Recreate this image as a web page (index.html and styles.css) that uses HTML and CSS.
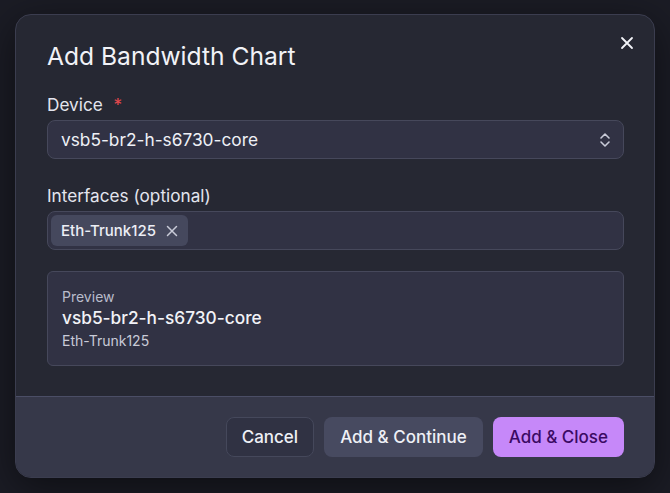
FILE: index.html
```html
<!DOCTYPE html>
<html lang="en">
<head>
    <meta charset="UTF-8">
    <meta name="viewport" content="width=device-width, initial-scale=1.0">
    <title>Add Bandwidth Chart</title>
    <link rel="stylesheet" href="styles.css">
</head>
<body>
    <div class="modal">
        <button class="close-button" aria-label="Close">
            <svg width="14" height="14" viewBox="0 0 14 14">
                <path d="M2 2 L12 12 M12 2 L2 12" stroke="#f2f3f8" stroke-width="1.8" stroke-linecap="round"/>
            </svg>
        </button>

        <div class="modal-body">
            <h2 class="modal-title">Add Bandwidth Chart</h2>

            <div class="field">
                <label class="field-label">Device <span class="required">*</span></label>
                <div class="select">
                    <span>vsb5-br2-h-s6730-core</span>
                    <svg class="select-icon" width="12" height="18" viewBox="0 0 12 18">
                        <path d="M2 7 L6 3 L10 7 M2 11 L6 15 L10 11" fill="none" stroke="#c9cbd8" stroke-width="1.6" stroke-linecap="round" stroke-linejoin="round"/>
                    </svg>
                </div>
            </div>

            <div class="field">
                <label class="field-label">Interfaces (optional)</label>
                <div class="multi-select">
                    <span class="chip">
                        Eth-Trunk125
                        <svg width="12" height="12" viewBox="0 0 12 12">
                            <path d="M1.5 1.5 L10.5 10.5 M10.5 1.5 L1.5 10.5" stroke="#c9cbd8" stroke-width="1.5" stroke-linecap="round"/>
                        </svg>
                    </span>
                </div>
            </div>

            <div class="preview">
                <div class="preview-label">Preview</div>
                <div class="preview-device">vsb5-br2-h-s6730-core</div>
                <div class="preview-iface">Eth-Trunk125</div>
            </div>
        </div>

        <div class="modal-footer">
            <button class="btn btn-cancel">Cancel</button>
            <button class="btn btn-secondary">Add &amp; Continue</button>
            <button class="btn btn-primary">Add &amp; Close</button>
        </div>
    </div>
</body>
</html>
```

FILE: styles.css
```css
* {
    margin: 0;
    padding: 0;
    box-sizing: border-box;
}

body {
    font-family: Inter, 'Noto Sans', sans-serif;
    background: #1b1c25;
    color: #e4e6f0;
    padding: 14px 15px 0;
    min-height: 100vh;
}

.modal {
    position: relative;
    width: 640px;
    background: #262833;
    border: 1px solid #3b3d4f;
    border-radius: 16px;
    overflow: hidden;
    box-shadow: 0 10px 40px rgba(0, 0, 0, 0.5);
}

.close-button {
    position: absolute;
    top: 17px;
    right: 16px;
    width: 22px;
    height: 22px;
    background: none;
    border: none;
    display: flex;
    align-items: center;
    justify-content: center;
    cursor: pointer;
}

.modal-body {
    padding: 25px 30px 30px 31px;
}

.modal-title {
    font-size: 24.6px;
    font-weight: 400;
    line-height: 32px;
    color: #f1f2f7;
    margin-bottom: 22px;
}

.field {
    margin-bottom: 26px;
}

.field:nth-of-type(2) {
    margin-bottom: 21px;
}

.field-label {
    display: block;
    font-size: 17.2px;
    line-height: 22px;
    color: #e3e5ee;
    margin-bottom: 4px;
}

.required {
    color: #e5484d;
    margin-left: 6px;
}

.select {
    height: 39px;
    background: #313244;
    border: 1px solid #46485b;
    border-radius: 8px;
    display: flex;
    align-items: center;
    justify-content: space-between;
    padding: 0 12px 0 13px;
    font-size: 17.3px;
    color: #eef0f6;
}

.multi-select {
    height: 39px;
    background: #313244;
    border: 1px solid #46485b;
    border-radius: 8px;
    display: flex;
    align-items: center;
    padding: 0 3px;
}

.chip {
    display: inline-flex;
    align-items: center;
    gap: 10px;
    height: 31px;
    padding: 0 10px;
    background: #45485d;
    border-radius: 6px;
    font-size: 15px;
    font-weight: 500;
    color: #eceef5;
}

.preview {
    background: #313244;
    border: 1px solid #46485b;
    border-radius: 6px;
    padding: 15px 15px 14px 14px;
}

.preview-label {
    font-size: 14px;
    line-height: 20px;
    color: #b9bccb;
}

.preview-device {
    font-size: 17.3px;
    font-weight: 500;
    line-height: 22px;
    color: #f1f2f7;
}

.preview-iface {
    font-size: 14px;
    line-height: 20px;
    color: #c9cbd8;
    margin-top: 2px;
}

.modal-footer {
    background: #363849;
    border-top: 1px solid #4b4e66;
    height: 81px;
    display: flex;
    align-items: center;
    justify-content: flex-end;
    gap: 10px;
    padding: 0 30px 0 0;
}

.btn {
    height: 40px;
    border-radius: 8px;
    font-family: inherit;
    font-size: 17px;
    font-weight: 500;
    padding: 0 15px;
    cursor: pointer;
    border: 1px solid transparent;
}

.btn-cancel {
    background: #303243;
    border-color: #45485b;
    color: #eef0f6;
}

.btn-secondary {
    background: #474a60;
    color: #eef0f6;
}

.btn-primary {
    background: #c688f9;
    color: #3b0a63;
}
```
